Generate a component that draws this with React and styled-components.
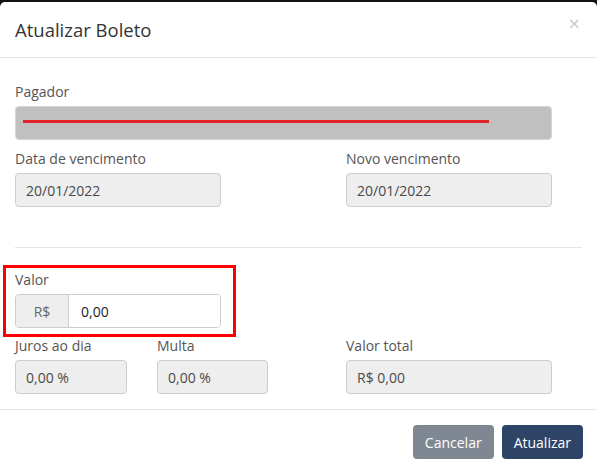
import React from 'react';
import styled, { createGlobalStyle } from 'styled-components';

const GlobalStyle = createGlobalStyle`
    * { box-sizing: border-box; }
    body {
        margin: 0;
        background: #fff;
        font-family: "Open Sans", "Liberation Sans", sans-serif;
    }
`;

function Field({ label, width, disabled, children }) {
    return (
        <FieldBox>
            <Label>{label}</Label>
            {children || <Input $w={width}>{disabled}</Input>}
        </FieldBox>
    );
}

function App() {
    return (
        <Page>
            <GlobalStyle />
            <Modal>
                <Header>
                    <Title>Atualizar Boleto</Title>
                    <Close>×</Close>
                </Header>
                <Body>
                    <Field label="Pagador">
                        <Redacted>
                            <RedLine />
                        </Redacted>
                    </Field>
                    <Row $cols="331px 206px">
                        <Field label="Data de vencimento" width="206px" disabled="20/01/2022" />
                        <Field label="Novo vencimento" width="206px" disabled="20/01/2022" />
                    </Row>
                    <Divider />
                    <Highlight>
                        <Field label="Valor">
                            <InputGroup>
                                <Addon>R$</Addon>
                                <GroupInput>0,00</GroupInput>
                            </InputGroup>
                        </Field>
                    </Highlight>
                    <Row $cols="142px 189px 206px">
                        <Field label="Juros ao dia" width="112px" disabled="0,00 %" />
                        <Field label="Multa" width="111px" disabled="0,00 %" />
                        <Field label="Valor total" width="206px" disabled="R$ 0,00" />
                    </Row>
                </Body>
                <Footer>
                    <Button $variant="secondary">Cancelar</Button>
                    <Button $variant="primary">Atualizar</Button>
                </Footer>
            </Modal>
        </Page>
    );
}

export default App;

const Page = styled.div`
    width: 597px;
    height: 473px;
    padding-top: 2px;
    background: #111;
    overflow: hidden;
`;

const Modal = styled.div`
    background: #fff;
    border-radius: 5px 5px 0 0;
    height: 100%;
    display: flex;
    flex-direction: column;
`;

const Header = styled.div`
    display: flex;
    justify-content: space-between;
    align-items: center;
    padding: 15px 15px;
    border-bottom: 1px solid #e5e5e5;
`;

const Title = styled.h4`
    margin: 0;
    font-size: 18.5px;
    font-weight: 400;
    line-height: 25px;
    color: #333;
`;

const Close = styled.span`
    font-size: 20px;
    line-height: 20px;
    color: #c8c8c8;
    margin-top: -12px;
    margin-right: 2px;
`;

const Body = styled.div`
    display: flex;
    flex-direction: column;
    gap: 9px;
    padding: 24px 15px 15px;
`;

const FieldBox = styled.div`
    display: flex;
    flex-direction: column;
    align-items: flex-start;
`;

const Label = styled.label`
    font-size: 14px;
    line-height: 20px;
    color: #555;
    margin-bottom: 4px;
`;

const Input = styled.div`
    width: ${p => p.$w};
    height: 34px;
    display: flex;
    align-items: center;
    padding: 0 10px;
    font-size: 14px;
    color: #4a4a4a;
    background: #eee;
    border: 1px solid #ccc;
    border-radius: 4px;
`;

const Redacted = styled.div`
    width: 537px;
    height: 34px;
    display: flex;
    align-items: center;
    padding-left: 7px;
    background: #c0c0c0;
    border: 1px solid #d6d6d6;
    border-radius: 4px;
`;

const RedLine = styled.span`
    width: 466px;
    height: 3px;
    margin-top: -3px;
    background: #e3232b;
`;

const Row = styled.div`
    display: grid;
    grid-template-columns: ${p => p.$cols};
`;

const Divider = styled.hr`
    width: 100%;
    margin: 31px 0 13px;
    border: 0;
    border-top: 1px solid #e5e5e5;
`;

const Highlight = styled.div`
    align-self: flex-start;
    margin: -5px 0 -10px -12px;
    padding: 2px 12px 6px 9px;
    border: 3px solid #f00;
`;

const InputGroup = styled.div`
    display: flex;
    width: 206px;
    height: 34px;
    border: 1px solid #ccc;
    border-radius: 4px;
    overflow: hidden;
`;

const Addon = styled.span`
    width: 53px;
    display: flex;
    align-items: center;
    justify-content: center;
    font-size: 14px;
    color: #666;
    background: #eee;
    border-right: 1px solid #ccc;
`;

const GroupInput = styled.span`
    flex: 1;
    display: flex;
    align-items: center;
    padding: 0 12px;
    font-size: 14px;
    color: #222;
    background: #fff;
`;

const Footer = styled.div`
    display: flex;
    justify-content: flex-end;
    gap: 8px;
    padding: 15px 14px 15px 15px;
    border-top: 1px solid #e5e5e5;
`;

const Button = styled.button`
    height: 34px;
    padding: 0 12px;
    font-family: inherit;
    font-size: 14px;
    color: #fff;
    border: 0;
    border-radius: 4px;
    background: ${p => (p.$variant === 'primary' ? '#2d4466' : '#7f8793')};
    cursor: pointer;
`;
